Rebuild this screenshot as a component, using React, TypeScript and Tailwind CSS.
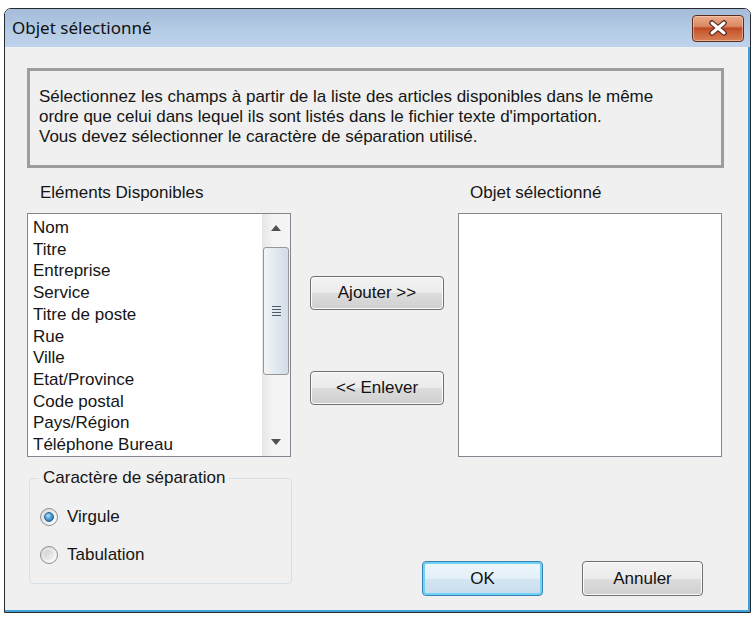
import React from 'react';

const items = [
  'Nom',
  'Titre',
  'Entreprise',
  'Service',
  'Titre de poste',
  'Rue',
  'Ville',
  'Etat/Province',
  'Code postal',
  'Pays/Région',
  'Téléphone Bureau',
];

function CloseButton() {
  return (
    <div className="w-[52px] h-[27px] rounded-[4px] border border-[#5b2d1f] overflow-hidden flex items-center justify-center bg-[linear-gradient(to_bottom,#e8ab8a_0%,#dc8a62_40%,#bd4a27_50%,#c85a31_60%,#d98054_100%)] shadow-[inset_0_0_0_1px_rgba(255,220,200,0.5)]">
      <svg width="22" height="16" viewBox="0 0 22 16">
        <path d="M5 3 L17 13 M17 3 L5 13" stroke="#5a2a1a" strokeWidth="5.5" strokeLinecap="round" />
        <path d="M5 3 L17 13 M17 3 L5 13" stroke="#ffffff" strokeWidth="3" strokeLinecap="round" />
      </svg>
    </div>
  );
}

function WinButton({ label, isDefault }: { label: string; isDefault?: boolean }) {
  return (
    <div
      className={`flex items-center justify-center rounded-[4px] border text-[17px] text-[#111] ${
        isDefault
          ? 'border-[#3c7fb1] shadow-[inset_0_0_0_2px_#6fd3f5] bg-[linear-gradient(to_bottom,#eef6fb_0%,#e3eff8_50%,#d3e6f3_50%,#c7dcec_100%)]'
          : 'border-[#707070] shadow-[inset_0_0_0_1px_#fbfbfb] bg-[linear-gradient(to_bottom,#f3f3f3_0%,#ebebeb_50%,#dddddd_50%,#cfcfcf_100%)]'
      }`}
    >
      {label}
    </div>
  );
}

function Radio({ label, checked }: { label: string; checked?: boolean }) {
  return (
    <div className="flex items-center h-[24px] gap-[9px]">
      <div className="w-[18px] h-[18px] rounded-full border border-[#8e8f8f] bg-[linear-gradient(to_bottom_right,#d8d8d8,#ffffff)] flex items-center justify-center">
        <div
          className={`w-[10px] h-[10px] rounded-full ${
            checked
              ? 'bg-[radial-gradient(circle_at_40%_35%,#b9e3fb_0%,#4a9fd8_45%,#1c5c96_100%)] border border-[#2a5f8e]'
              : 'bg-[linear-gradient(to_bottom_right,#cfcfcf,#f4f4f4)]'
          }`}
        />
      </div>
      <span className="text-[17px]">{label}</span>
    </div>
  );
}

function ScrollArrow({ down }: { down?: boolean }) {
  return (
    <div className="h-[28px] flex items-center justify-center">
      <svg width="10" height="6" viewBox="0 0 10 6">
        <polygon points={down ? '0,0 10,0 5,6' : '0,6 10,6 5,0'} fill="#505050" />
      </svg>
    </div>
  );
}

export default function App() {
  return (
    <div className="w-[751px] h-[617px] bg-white pt-[8px] pl-[4px] font-['Liberation_Sans',Arial,sans-serif] text-[#151515]">
      <div className="w-[747px] h-[605px] flex flex-col border border-[#272b31] rounded-t-[7px] overflow-hidden">
        {/* Title bar */}
        <div className="h-[38px] shrink-0 flex items-center justify-between pl-[7px] pr-[6px] bg-[linear-gradient(to_bottom,#a4bcd9_0%,#b4cbe5_55%,#bfd4eb_100%)]">
          <span className="font-['Noto_Sans','Open_Sans',sans-serif] text-[17px] text-[#111]">Objet sélectionné</span>
          <CloseButton />
        </div>

        {/* Client area */}
        <div className="flex-1 bg-[#f0f0f0] border-r-2 border-b-2 border-[#3fa3d9] pl-[22px] pt-[21px] flex flex-col">
          {/* Message box */}
          <div className="w-[697px] h-[100px] border-[3px] border-[#9d9d9d] px-[9px] pt-[16px] text-[17px] leading-[20px]">
            <p>Sélectionnez les champs à partir de la liste des articles disponibles dans le même</p>
            <p>ordre que celui dans lequel ils sont listés dans le fichier texte d&apos;importation.</p>
            <p>Vous devez sélectionner le caractère de séparation utilisé.</p>
          </div>

          {/* Labels */}
          <div className="grid grid-cols-[264px_167px_264px] mt-[15px] h-[20px] text-[17px] leading-[20px]">
            <span className="pl-[13px]">Eléments Disponibles</span>
            <span />
            <span className="pl-[12px]">Objet sélectionné</span>
          </div>

          {/* Lists and buttons */}
          <div className="grid grid-cols-[264px_167px_264px] mt-[10px] h-[244px]">
            <div className="border border-[#828790] bg-white flex">
              <div className="flex-1 pl-[5px] pt-[3px] text-[17px] leading-[21.7px] overflow-hidden">
                {items.map((it) => (
                  <div key={it}>{it}</div>
                ))}
              </div>
              <div className="w-[28px] flex flex-col bg-[linear-gradient(to_right,#e6e6e6,#f4f4f4_40%,#f4f4f4)]">
                <ScrollArrow />
                <div className="mt-[5px] h-[128px] mx-[1px] rounded-[3px] border border-[#979797] bg-[linear-gradient(to_right,#f4f4f4_0%,#e4ebf2_40%,#d3dde8_100%)] flex items-center justify-center">
                  <div className="flex flex-col gap-[2px]">
                    <div className="w-[9px] h-[1px] bg-[#4e5a66]" />
                    <div className="w-[9px] h-[1px] bg-[#4e5a66]" />
                    <div className="w-[9px] h-[1px] bg-[#4e5a66]" />
                    <div className="w-[9px] h-[1px] bg-[#4e5a66]" />
                  </div>
                </div>
                <div className="flex-1" />
                <ScrollArrow down />
              </div>
            </div>

            <div className="pl-[19px] pt-[63px] flex flex-col">
              <div className="w-[134px] h-[34px] grid">
                <WinButton label="Ajouter >>" />
              </div>
              <div className="w-[134px] h-[34px] mt-[61px] grid">
                <WinButton label="<< Enlever" />
              </div>
            </div>

            <div className="border border-[#828790] bg-white" />
          </div>

          {/* Bottom row */}
          <div className="flex mt-[11px]">
            <fieldset className="ml-[2px] w-[263px] h-[116px] border border-[#d5dfe5] rounded-[4px] px-[9px]">
              <legend className="px-[4px] text-[17px] leading-[20px]">Caractère de séparation</legend>
              <div className="mt-[17px] ml-[1px] flex flex-col gap-[14px]">
                <Radio label="Virgule" checked />
                <Radio label="Tabulation" />
              </div>
            </fieldset>

            <div className="ml-[130px] mt-[93px] flex gap-[39px]">
              <div className="w-[121px] h-[35px] grid">
                <WinButton label="OK" isDefault />
              </div>
              <div className="w-[121px] h-[35px] grid">
                <WinButton label="Annuler" />
              </div>
            </div>
          </div>
        </div>
      </div>
    </div>
  );
}
